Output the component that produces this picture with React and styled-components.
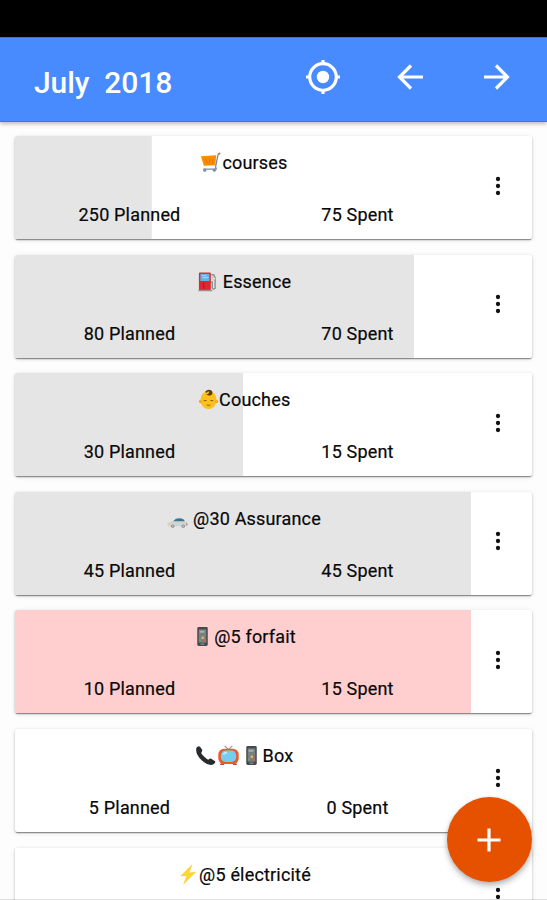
import React from 'react';
import styled, { createGlobalStyle } from 'styled-components';

const GlobalStyle = createGlobalStyle`
  * { box-sizing: border-box; }
  body { margin: 0; background: #fdfdfd; font-family: Roboto, sans-serif; }
`;

const Screen = styled.div`
  width: 547px;
  height: 900px;
  overflow: hidden;
  position: relative;
  display: flex;
  flex-direction: column;
  background: #fdfdfd;
  color: #080808;
`;

const StatusBar = styled.div`
  flex: none;
  height: 37px;
  background: #000;
`;

const Toolbar = styled.header`
  flex: none;
  height: 85px;
  padding: 0 32px 0 34px;
  display: flex;
  align-items: center;
  background: #488aff;
  border-top: 1px solid #3a72d6;
  border-bottom: 1px solid #3179ef;
  color: #fff;
  box-shadow: 0 2px 4px rgba(0, 0, 0, 0.26);
`;

const Heading = styled.h1`
  flex: 1;
  margin: 7px 0 0;
  font-size: 30px;
  line-height: 36px;
  font-weight: 500;
  letter-spacing: -0.06px;
  white-space: pre;
`;

const ToolButton = styled.button`
  display: flex;
  margin: 0 0 5px ${(p) => p.$gap}px;
  padding: 0;
  border: 0;
  background: none;
  color: inherit;
`;

const List = styled.main`
  padding: 14px 15px 0 15px;
  display: flex;
  flex-direction: column;
  gap: 15.6px;
`;

const Card = styled.article`
  flex: none;
  height: 103px;
  display: flex;
  border-radius: 2px;
  background: #fff;
  overflow: hidden;
  box-shadow: 0 2px 1px -1px rgba(0, 0, 0, 0.3), 0 1px 2px rgba(0, 0, 0, 0.26), 0 1px 5px rgba(0, 0, 0, 0.1);
`;

const Body = styled.div`
  width: 456px;
  display: grid;
  grid-template-columns: 1fr 1fr;
  grid-template-rows: 52px 51px;
  justify-items: center;
  align-items: center;
  font-size: 18px;
  font-weight: 400;
  letter-spacing: 0.18px;
  -webkit-text-stroke: 0.2px #080808;
  background: linear-gradient(${(p) => p.$fill}, ${(p) => p.$fill}) no-repeat 0 0 / ${(p) => p.$percent}% 100%;
`;

const Title = styled.div`
  grid-column: 1 / 3;
  display: flex;
  align-items: center;
  height: 24px;
  margin-top: 1px;
  padding-left: 2px;
  white-space: pre;
`;

const Amount = styled.div`
  padding: 2px 0 0 1px;
`;

const Glyph = styled.svg`
  flex: none;
  width: 21px;
  height: 21px;
  margin-right: ${(p) => p.$after}px;
`;

const More = styled.button`
  width: 54px;
  display: flex;
  align-items: center;
  justify-content: center;
  padding: 0 0 4px;
  border: 0;
  background: none;
`;

const AddButton = styled.button`
  position: absolute;
  left: 447px;
  top: 797px;
  width: 85px;
  height: 85px;
  display: flex;
  align-items: center;
  justify-content: center;
  padding: 0 1px 0 0;
  border: 0;
  border-radius: 50%;
  background: #e65100;
  box-shadow: 0 4px 6px rgba(0, 0, 0, 0.22), 0 1px 4px rgba(0, 0, 0, 0.15);
`;

const BottomEdge = styled.div`
  position: absolute;
  left: 0;
  right: 0;
  bottom: 0;
  height: 1px;
  background: rgba(0, 0, 0, 0.12);
`;

const mobile = (
  <g>
    <rect x="5.5" y="1" width="11" height="20" rx="1.5" fill="#45494b" />
    <rect x="7" y="3.5" width="8" height="14" fill="#768082" />
    <path d="M8 5h5v2H8z" fill="#a8b0b1" />
    <path d="M7.5 14h2v2h-2z" fill="#64a36b" />
    <path d="M10 11h2.5v2.5H10z" fill="#e0b44d" />
    <path d="M12 14h2.5v2H12z" fill="#db5e46" />
    <path d="M9 19h4" stroke="#9da4a5" />
  </g>
);

const drawings = {
  cart: (
    <g fill="none">
      <path d="M1 4.500L17 3.500L16 14L4 14.500Z" fill="#fb8c00" />
      <path d="M6 7l1.500 5M10 7l.3 5M13.500 7l-.3 5" stroke="#e56f00" strokeWidth="0.9" />
      <path d="M20.500 1.500L19 2.500L16.300 15.500L17 18H3.500" stroke="#78909c" strokeWidth="1.4" />
      <path d="M21.300 1.300L19.300 2" stroke="#d66b43" strokeWidth="1.800" />
      <circle cx="5" cy="19" r="1.600" fill="#78909c" />
      <circle cx="15" cy="19" r="1.600" fill="#78909c" />
    </g>
  ),
  pump: (
    <g fill="none">
      <path d="M15 4h2.500l1.500 3v11q-2 2-3-.5v-6h-2" stroke="#8c9293" strokeWidth="1.500" />
      <path d="M16 6.500h3v3h-2z" fill="#eceeee" stroke="#999" strokeWidth=".5" />
      <rect x="2" y="1.500" width="12.500" height="18.500" rx="1" fill="#d52b31" />
      <rect x="3.500" y="3" width="9.500" height="7.500" fill="#64b4dd" />
      <path d="M5 5h5M6 7h6" stroke="#a5d8ee" strokeWidth="1.200" />
      <path d="M7 12v7" stroke="#aa1723" />
      <path d="M1.500 20.500H16" stroke="#8e9293" strokeWidth="1.500" />
    </g>
  ),
  baby: (
    <g fill="none">
      <ellipse cx="11" cy="11.500" rx="8.500" ry="9.500" fill="#fcc21b" />
      <circle cx="2.700" cy="13" r="1.800" fill="#f4ae13" />
      <circle cx="19.300" cy="13" r="1.800" fill="#f4ae13" />
      <path d="M8 3.500q3-3 6-.8q1 4-3 3q3-1.500 .5-2.200" stroke="#5d3a16" strokeWidth="1.700" />
      <path d="M6 12.500q1.500-1 3 0M13 12.500q1.500-1 3 0" stroke="#7c5719" strokeWidth="1.100" />
      <path d="M9 16.500q2 1.300 4 0" stroke="#b56c25" strokeWidth="1.200" />
    </g>
  ),
  car: (
    <g>
      <path d="M.5 18q-.3-3.500 5-4l3-2.500q5-1.500 9 .5l2 2q2.500 0 2 5H.5z" fill="#d1d4d4" />
      <path d="M6.500 14l3-2.700q4.500-1.300 8 .7l1 2z" fill="#397889" />
      <path d="M.5 16h3v1.500h-3z" fill="#edd08b" />
      <path d="M20 16h1.500v2H20z" fill="#c98b75" />
      <circle cx="6" cy="19" r="1.800" fill="#858b8c" />
      <circle cx="17" cy="19" r="1.800" fill="#858b8c" />
      <circle cx="6" cy="19" r=".8" fill="#ccc" />
      <circle cx="17" cy="19" r=".8" fill="#ccc" />
    </g>
  ),
  phone: (
    <path d="M1.500 3Q3.500 0 5.500 2L7.500 5Q8 6.500 6.500 8Q6.500 9 9.500 12T14 15.500Q15.500 13.500 17 14.500L21 17Q22 18.500 19 20.500Q14 22.500 7 16T1.500 3Z" fill="#272b2d" />
  ),
  tv: (
    <g fill="none">
      <path d="M7 1l4 4l4-4" stroke="#999f9f" strokeWidth="1.200" />
      <path d="M3 19l-1 2h4l1-2M15 19l1 2h4l-1-2" fill="#bd4b25" />
      <rect x=".3" y="4" width="21.400" height="16" rx="6" fill="#ec5a2b" />
      <rect x="3" y="5.800" width="16" height="12" rx="5" fill="#75cdef" />
      <path d="M5.500 10q1-2 4-2" stroke="#c4edfa" strokeWidth="2" />
    </g>
  ),
  bolt: <path d="M15.500 1L4 12.500L10.500 12L7 21L19.500 8.500L12.500 9.500Z" fill="#fdd835" stroke="#f4bd24" strokeWidth=".5" />,
  mobile,
};

const budgets = [
  { icons: [['cart', 1]], name: 'courses', planned: 250, spent: 75 },
  { icons: [['pump', 5]], name: 'Essence', planned: 80, spent: 70 },
  { icons: [['baby', 0.5]], name: 'Couches', planned: 30, spent: 15 },
  { icons: [['car', 5]], name: '@30 Assurance', planned: 45, spent: 45 },
  { icons: [['mobile', 1]], name: '@5 forfait', planned: 10, spent: 15 },
  { icons: [['phone', 2], ['tv', 2], ['mobile', 1]], name: 'Box', planned: 5, spent: 0 },
  { icons: [['bolt', 1]], name: '@5 électricité' },
];

function BudgetCard({ icons, name, planned, spent }) {
  const hasAmounts = planned !== undefined;
  const percent = hasAmounts ? Math.min(100, (spent / planned) * 100) : 0;
  return (
    <Card>
      <Body $percent={percent} $fill={spent > planned ? '#ffcfcf' : '#e5e5e5'}>
        <Title>
          {icons.map(([kind, after]) => (
            <Glyph key={kind} $after={after} viewBox="0 0 22 22">{drawings[kind]}</Glyph>
          ))}
          <span>{name}</span>
        </Title>
        {hasAmounts && <Amount>{planned} Planned</Amount>}
        {hasAmounts && <Amount>{spent} Spent</Amount>}
      </Body>
      <More aria-label="More">
        <svg width="6" height="20" viewBox="0 0 6 20" fill="#111">
          <circle cx="3" cy="3" r="2.150" />
          <circle cx="3" cy="10" r="2.150" />
          <circle cx="3" cy="17" r="2.150" />
        </svg>
      </More>
    </Card>
  );
}

export default function App() {
  return (
    <Screen>
      <GlobalStyle />
      <StatusBar />
      <Toolbar>
        <Heading>{'July  2018'}</Heading>
        <ToolButton $gap={0} aria-label="Current month">
          <svg width="36" height="36" viewBox="0 0 36 36" fill="none" stroke="#fff" strokeWidth="3.2">
            <circle cx="18" cy="18" r="13.300" />
            <circle cx="18" cy="18" r="6.200" fill="#fff" stroke="none" />
            <path d="M18 1v4M18 31v4M1 18h4M31 18h4" />
          </svg>
        </ToolButton>
        <ToolButton $gap={51} aria-label="Previous month">
          <svg width="36" height="36" viewBox="0 0 36 36" fill="none" stroke="#fff" strokeWidth="3.2">
            <path d="M31 18H7M19 6.500L7.500 18L19 29.500" />
          </svg>
        </ToolButton>
        <ToolButton $gap={51} aria-label="Next month">
          <svg width="36" height="36" viewBox="0 0 36 36" fill="none" stroke="#fff" strokeWidth="3.2">
            <path d="M5 18H29M17 6.500L28.500 18L17 29.500" />
          </svg>
        </ToolButton>
      </Toolbar>
      <List>
        {budgets.map((b) => (
          <BudgetCard key={b.name} {...b} />
        ))}
      </List>
      <BottomEdge />
      <AddButton aria-label="Add budget">
        <svg width="26" height="26" viewBox="0 0 26 26" stroke="#fff" strokeWidth="3.200">
          <path d="M13 1.500v23M1.500 13h23" />
        </svg>
      </AddButton>
    </Screen>
  );
}
